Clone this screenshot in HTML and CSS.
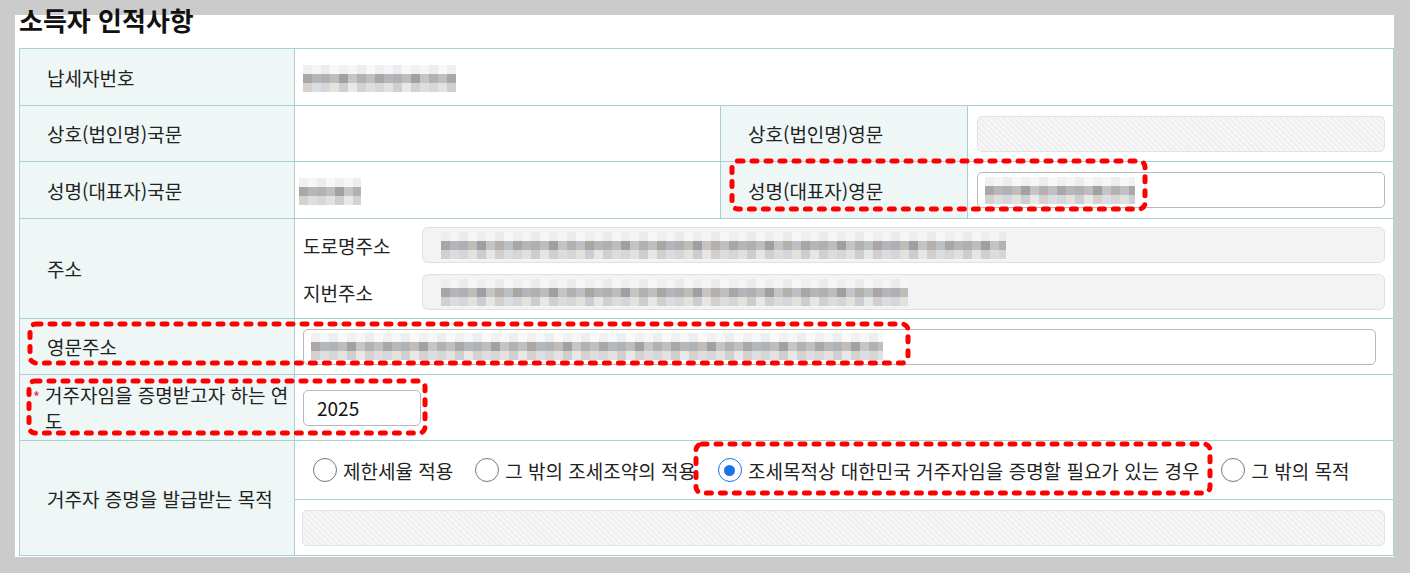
FILE: index.html
```html
<!DOCTYPE html>
<html lang="ko">
<head>
    <meta charset="UTF-8">
    <meta name="viewport" content="width=device-width, initial-scale=1.0">
    <title>소득자 인적사항</title>
    <link rel="stylesheet" href="styles.css">
</head>
<body>

<div class="panel">
    <h2 class="title">소득자 인적사항</h2>

    <table class="info">
        <colgroup>
            <col class="col-label">
            <col class="col-value">
            <col class="col-label2">
            <col class="col-value">
        </colgroup>
        <tr class="row-tin">
            <th>납세자번호</th>
            <td colspan="3"><span class="blur blur-tin"></span></td>
        </tr>
        <tr class="row-std">
            <th>상호(법인명)국문</th>
            <td></td>
            <th>상호(법인명)영문</th>
            <td class="cell-field"><div class="field disabled"></div></td>
        </tr>
        <tr class="row-name">
            <th>성명(대표자)국문</th>
            <td><span class="blur blur-name"></span></td>
            <th>성명(대표자)영문</th>
            <td class="cell-field"><div class="field"><span class="blur blur-ename"></span></div></td>
        </tr>
        <tr class="row-addr">
            <th>주소</th>
            <td colspan="3">
                <div class="addr">
                    <span class="sub">도로명주소</span>
                    <div class="field readonly"><span class="blur blur-road"></span></div>
                    <span class="sub">지번주소</span>
                    <div class="field readonly"><span class="blur blur-lot"></span></div>
                </div>
            </td>
        </tr>
        <tr class="row-std">
            <th>영문주소</th>
            <td colspan="3" class="cell-eng"><div class="field"><span class="blur blur-eaddr"></span></div></td>
        </tr>
        <tr class="row-year">
            <th class="req-label"><span class="req">*</span>거주자임을 증명받고자 하는 연도</th>
            <td colspan="3"><div class="field year">2025</div></td>
        </tr>
        <tr class="row-radio">
            <th rowspan="2">거주자 증명을 발급받는 목적</th>
            <td colspan="3">
                <div class="radios">
                    <label class="radio"><span class="dot"></span>제한세율 적용</label>
                    <label class="radio"><span class="dot"></span>그 밖의 조세조약의 적용</label>
                    <label class="radio"><span class="dot checked"></span>조세목적상 대한민국 거주자임을 증명할 필요가 있는 경우</label>
                    <label class="radio"><span class="dot"></span>그 밖의 목적</label>
                </div>
            </td>
        </tr>
        <tr class="row-std">
            <td colspan="3" class="cell-other"><div class="field disabled"></div></td>
        </tr>
    </table>
</div>

<!-- 강조 표시 -->
<div class="mark mark-ename"><svg><rect rx="6" ry="6"></rect></svg></div>
<div class="mark mark-eaddr"><svg><rect rx="6" ry="6"></rect></svg></div>
<div class="mark mark-year"><svg><rect rx="6" ry="6"></rect></svg></div>
<div class="mark mark-purpose"><svg><rect rx="6" ry="6"></rect></svg></div>

</body>
</html>
```

FILE: styles.css
```css
body {
    margin: 0;
    background-color: #cbcbcb;
    font-family: "Noto Sans CJK KR", "Noto Sans", sans-serif;
    color: #222;
    position: relative;
    height: 573px;
    overflow: hidden;
}

.panel {
    margin: 15px 0 0 15px;
    width: 1379px;
    height: 542px;
    box-sizing: border-box;
    padding: 1px 1px 0 4px;
    background: #fff;
}

.title {
    margin: -11px 0 13px 0;
    height: 30px;
    line-height: 30px;
    font-size: 26px;
    font-weight: bold;
    color: #111;
}

.info {
    width: 1374px;
    table-layout: fixed;
    border-collapse: collapse;
    font-size: 19px;
}

.col-label { width: 275px; }
.col-value { width: 426px; }
.col-label2 { width: 247px; }

.info th, .info td {
    border: 1px solid #a9d1d5;
    padding: 0 8px;
    vertical-align: middle;
}

.info th {
    background: #eef7f6;
    font-weight: normal;
    text-align: left;
    padding: 0 8px 0 27px;
}

.row-tin { height: 57px; }
.row-std { height: 56px; }
.row-name { height: 57px; }
.row-addr { height: 100px; }
.row-year { height: 66px; }
.row-radio { height: 59px; }

.info .cell-field { padding: 0 8px 0 9px; }
.info .cell-eng { padding-right: 17px; }
.info .cell-other { padding-left: 7px; }

.info .req-label {
    line-height: 26px;
    padding: 0 4px 0 25px;
    word-break: break-all;
}

.req {
    display: inline-block;
    width: 12px;
    margin-left: -12px;
    color: #e8236a;
    font-size: 15px;
    line-height: 14px;
    vertical-align: 0;
}

.field {
    height: 36px;
    box-sizing: border-box;
    border: 1px solid #b8b8b8;
    border-radius: 5px;
    background: #fff;
    display: flex;
    align-items: center;
    padding: 0 7px;
}

.field.readonly {
    background: #f3f3f3;
    border-color: #e0dfe3;
    border-radius: 6px;
    padding: 0 18px;
}

.field.disabled {
    border-color: #e2e2e2;
    background: repeating-linear-gradient(45deg, #efefef 0 2px, #f7f7f7 2px 4px);
}

.field.year {
    width: 118px;
    padding: 0 13px;
    font-size: 19px;
    color: #111;
}

.addr {
    display: grid;
    grid-template-columns: 119px 1fr;
    row-gap: 11px;
    align-items: center;
}

.radios {
    display: flex;
    align-items: center;
    gap: 22px;
    padding-left: 10px;
}

.radio {
    display: flex;
    align-items: center;
    gap: 6px;
    white-space: nowrap;
}

.dot {
    width: 24px;
    height: 24px;
    box-sizing: border-box;
    border: 1px solid #777;
    border-radius: 50%;
    display: flex;
    align-items: center;
    justify-content: center;
}

.dot.checked {
    border-color: #1a73e8;
}

.dot.checked::after {
    content: "";
    width: 11px;
    height: 11px;
    border-radius: 50%;
    background: #1a73e8;
}

.blur {
    display: inline-block;
    height: 27px;
    vertical-align: middle;
    opacity: 0.85;
    background:
        repeating-linear-gradient(90deg, #9d9898 0 9px, #a9abae 9px 18px, #a3a6aa 18px 27px, #b7b3af 27px 36px, #8f9296 36px 45px, #bcbcbc 45px 54px, #a8a5a2 54px 63px, #b4b6b9 63px 72px) 0 9px / 100% 9px no-repeat,
        repeating-linear-gradient(90deg, #cdc9c7 0 9px, #d8d9dc 9px 18px, #cfd1d3 18px 27px, #e0ded9 27px 36px, #c6c7ca 36px 45px, #e4e4e4 45px 54px) 0 18px / 100% 9px no-repeat,
        repeating-linear-gradient(90deg, #f0eeed 0 9px, #f5f5f5 9px 18px, #e9eaec 18px 27px, #f7f7f7 27px 36px) 0 0 / 100% 9px no-repeat;
}

.blur-tin { width: 153px; }
.blur-name { width: 62px; margin-left: -4px; }
.blur-ename { width: 150px; }
.blur-road { width: 565px; }
.blur-lot { width: 467px; }
.blur-eaddr { width: 572px; }

.mark {
    position: absolute;
}

.mark svg {
    width: 100%;
    height: 100%;
    overflow: visible;
    display: block;
}

.mark rect {
    width: 100%;
    height: 100%;
    fill: none;
    stroke: #ff0000;
    stroke-width: 5;
    stroke-linecap: round;
    stroke-dasharray: 5 9;
}

.mark-ename { left: 732px; top: 161px; width: 413px; height: 48px; }
.mark-eaddr { left: 30px; top: 324px; width: 878px; height: 39px; }
.mark-year { left: 29px; top: 381px; width: 396px; height: 52px; }
.mark-purpose { left: 696px; top: 444px; width: 514px; height: 49px; }
```
